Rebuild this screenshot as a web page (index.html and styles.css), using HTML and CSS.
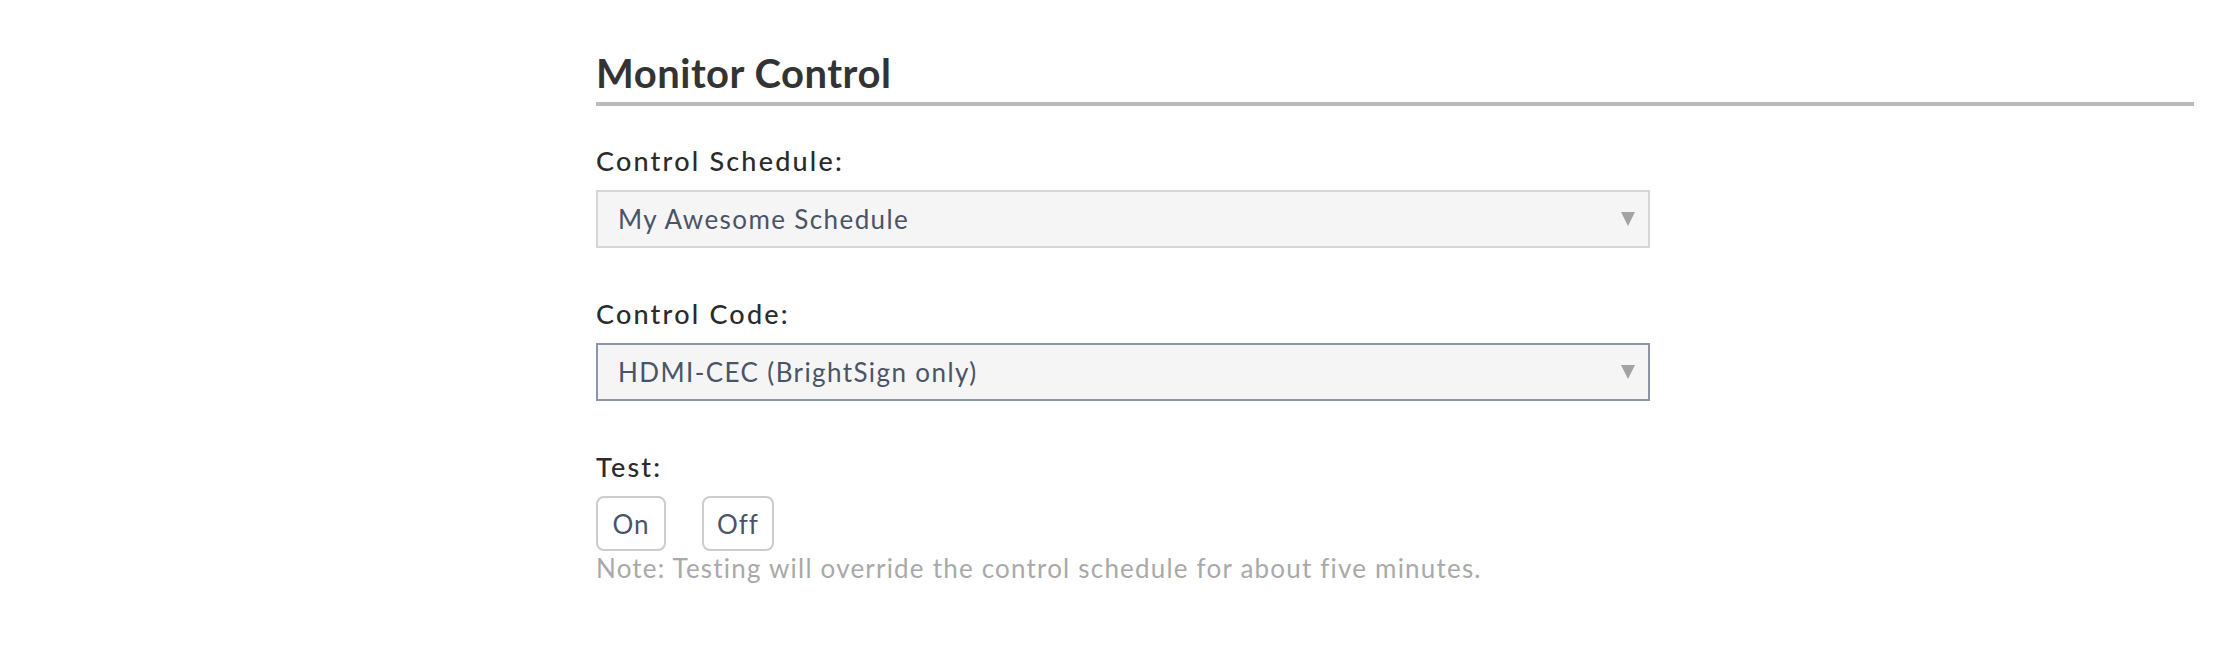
FILE: index.html
```html
<!DOCTYPE html>
<html>
<head>
<meta charset="utf-8">
<title>Monitor Control</title>
<link rel="stylesheet" href="styles.css">
</head>
<body>
<section class="panel">
  <h2 class="panel-title">Monitor Control</h2>
  <div class="field">
    <div class="field-label">Control Schedule:</div>
    <div class="select">
      <span class="select-value">My Awesome Schedule</span>
      <span class="select-arrow"></span>
    </div>
  </div>
  <div class="field">
    <div class="field-label">Control Code:</div>
    <div class="select select-focused">
      <span class="select-value">HDMI-CEC (BrightSign only)</span>
      <span class="select-arrow"></span>
    </div>
  </div>
  <div class="field field-test">
    <div class="field-label">Test:</div>
    <div class="buttons">
      <button class="btn">On</button>
      <button class="btn">Off</button>
    </div>
    <div class="note">Note: Testing will override the control schedule for about five minutes.</div>
  </div>
</section>
</body>
</html>
```
FILE: styles.css
```css
html, body {
  margin: 0;
  padding: 0;
  background: #ffffff;
}
body {
  font-family: Lato, "Noto Sans", sans-serif;
}
.panel {
  margin-left: 596px;
  width: 1598px;
  padding-top: 49px;
}
.panel-title {
  margin: 0;
  font-size: 40px;
  line-height: 48px;
  font-weight: 700;
  letter-spacing: 0.5px;
  color: #333333;
  padding-bottom: 5px;
  border-bottom: 4px solid #bbbbbb;
}
.field {
  width: 1054px;
}
.field-label {
  font-size: 27px;
  line-height: 30px;
  font-weight: 500;
  letter-spacing: 2.2px;
  color: #2b2b2b;
  margin-top: 40px;
  margin-bottom: 14px;
}
.field + .field .field-label {
  margin-top: 51px;
}
.field-test .field-label {
  margin-top: 47px;
}
.select {
  box-sizing: border-box;
  height: 58px;
  border: 2px solid #d6d6d6;
  background: #f5f5f5;
  display: flex;
  align-items: center;
  justify-content: space-between;
  padding: 0 13px 0 20px;
}
.select-focused {
  border-color: #8e96aa;
}
.select-value {
  font-size: 26px;
  letter-spacing: 1.4px;
  color: #4b5366;
  line-height: 30px;
}
.select-arrow {
  width: 0;
  height: 0;
  border-left: 7.5px solid transparent;
  border-right: 7.5px solid transparent;
  border-top: 14px solid #a3a3a3;
}
.buttons {
  display: flex;
  gap: 36px;
}
.btn {
  box-sizing: border-box;
  height: 55px;
  min-width: 70px;
  padding: 0 13px;
  border: 2px solid #cccccc;
  border-radius: 8px;
  background: #ffffff;
  font-family: Lato, "Noto Sans", sans-serif;
  font-size: 26px;
  letter-spacing: 1px;
  color: #4b5366;
}
.note {
  margin-top: 3px;
  font-size: 26px;
  line-height: 29px;
  letter-spacing: 1.2px;
  color: #a9a9a9;
}
```
